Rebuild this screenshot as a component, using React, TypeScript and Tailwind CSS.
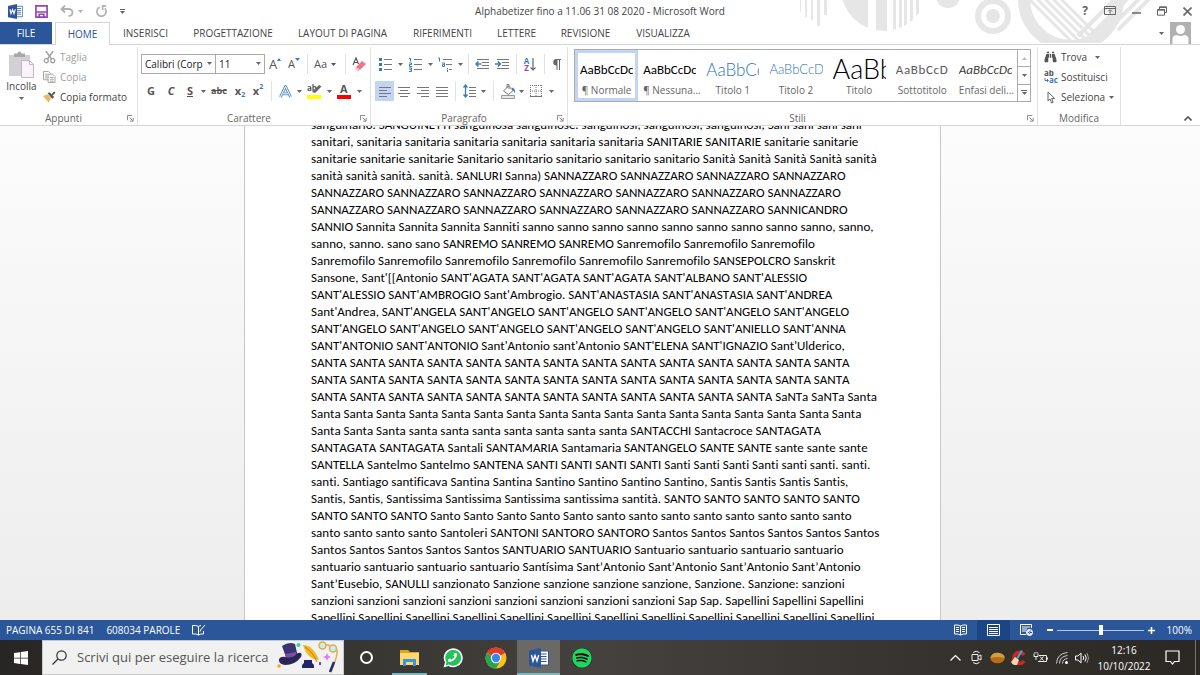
import { useState, type ReactNode } from "react";
import { clsx } from "clsx";
import { FaPhoneAlt, FaSpotify, FaBinoculars } from "react-icons/fa";

const tabs = [
  { label: "INSERISCI", width: "w-[71px]" },
  { label: "PROGETTAZIONE", width: "w-[104px]" },
  { label: "LAYOUT DI PAGINA", width: "w-[115px]" },
  { label: "RIFERIMENTI", width: "w-[85px]" },
  { label: "LETTERE", width: "w-[63px]" },
  { label: "REVISIONE", width: "w-[75px]" },
  { label: "VISUALIZZA", width: "w-[80px]" },
];

const styles = [
  { name: "¶ Normale", sample: "AaBbCcDc", look: "font-[Carlito,Calibri,sans-serif] text-[13px] text-black" },
  { name: "¶ Nessuna...", sample: "AaBbCcDc", look: "font-[Carlito,Calibri,sans-serif] text-[13px] text-black" },
  { name: "Titolo 1", sample: "AaBbCc", look: "font-[Lato,sans-serif] text-[17px] font-light text-[#2e74b5]" },
  { name: "Titolo 2", sample: "AaBbCcD", look: "font-[Lato,sans-serif] text-[13px] font-light text-[#2e74b5]" },
  { name: "Titolo", sample: "AaBb", look: "font-[Lato,sans-serif] text-[27px] font-light text-black" },
  { name: "Sottotitolo", sample: "AaBbCcD", look: "font-[Carlito,Calibri,sans-serif] text-[13px] tracking-wider text-[#5a5a5a]" },
  { name: "Enfasi deli...", sample: "AaBbCcDc", look: "font-[Carlito,Calibri,sans-serif] text-[13px] italic text-[#404040]" },
];

const lines = [
  "sanguinario. SANGUINETTI sanguinosa sanguinose. sanguinosi, sanguinosi, sanguinosi, Sani sani sani sani",
  "sanitari, sanitaria sanitaria sanitaria sanitaria sanitaria sanitaria SANITARIE SANITARIE sanitarie sanitarie",
  "sanitarie sanitarie sanitarie Sanitario sanitario sanitario sanitario sanitario Sanità Sanità Sanità Sanità sanità",
  "sanità sanità sanità. sanità. SANLURI Sanna) SANNAZZARO SANNAZZARO SANNAZZARO SANNAZZARO",
  "SANNAZZARO SANNAZZARO SANNAZZARO SANNAZZARO SANNAZZARO SANNAZZARO SANNAZZARO",
  "SANNAZZARO SANNAZZARO SANNAZZARO SANNAZZARO SANNAZZARO SANNAZZARO SANNICANDRO",
  "SANNIO Sannita Sannita Sannita Sanniti sanno sanno sanno sanno sanno sanno sanno sanno sanno, sanno,",
  "sanno, sanno. sano sano SANREMO SANREMO SANREMO Sanremofilo Sanremofilo Sanremofilo",
  "Sanremofilo Sanremofilo Sanremofilo Sanremofilo Sanremofilo Sanremofilo SANSEPOLCRO Sanskrit",
  "Sansone, Sant'[[Antonio SANT'AGATA SANT'AGATA SANT'AGATA SANT'ALBANO SANT'ALESSIO",
  "SANT'ALESSIO SANT'AMBROGIO Sant'Ambrogio. SANT'ANASTASIA SANT'ANASTASIA SANT'ANDREA",
  "Sant'Andrea, SANT'ANGELA SANT'ANGELO SANT'ANGELO SANT'ANGELO SANT'ANGELO SANT'ANGELO",
  "SANT'ANGELO SANT'ANGELO SANT'ANGELO SANT'ANGELO SANT'ANGELO SANT'ANIELLO SANT'ANNA",
  "SANT'ANTONIO SANT'ANTONIO Sant'Antonio sant'Antonio SANT'ELENA SANT'IGNAZIO Sant'Ulderico,",
  "SANTA SANTA SANTA SANTA SANTA SANTA SANTA SANTA SANTA SANTA SANTA SANTA SANTA SANTA",
  "SANTA SANTA SANTA SANTA SANTA SANTA SANTA SANTA SANTA SANTA SANTA SANTA SANTA SANTA",
  "SANTA SANTA SANTA SANTA SANTA SANTA SANTA SANTA SANTA SANTA SANTA SANTA SaNTa SaNTa Santa",
  "Santa Santa Santa Santa Santa Santa Santa Santa Santa Santa Santa Santa Santa Santa Santa Santa Santa",
  "Santa Santa Santa santa santa santa santa santa santa santa SANTACCHI Santacroce SANTAGATA",
  "SANTAGATA SANTAGATA Santali SANTAMARIA Santamaria SANTANGELO SANTE SANTE sante sante sante",
  "SANTELLA Santelmo Santelmo SANTENA SANTI SANTI SANTI SANTI Santi Santi Santi Santi santi santi. santi.",
  "santi. Santiago santificava Santina Santina Santino Santino Santino Santino, Santis Santis Santis Santis,",
  "Santis, Santis, Santissima Santissima Santissima santissima santità. SANTO SANTO SANTO SANTO SANTO",
  "SANTO SANTO SANTO Santo Santo Santo Santo Santo santo santo santo santo santo santo santo santo",
  "santo santo santo santo Santoleri SANTONI SANTORO SANTORO Santos Santos Santos Santos Santos Santos",
  "Santos Santos Santos Santos Santos SANTUARIO SANTUARIO Santuario santuario santuario santuario",
  "santuario santuario santuario santuario Santísima Sant’Antonio Sant’Antonio Sant’Antonio Sant’Antonio",
  "Sant’Eusebio, SANULLI sanzionato Sanzione sanzione sanzione sanzione, Sanzione. Sanzione: sanzioni",
  "sanzioni sanzioni sanzioni sanzioni sanzioni sanzioni sanzioni sanzioni Sap Sap. Sapellini Sapellini Sapellini",
  "Sapellini Sapellini Sapellini Sapellini Sapellini Sapellini Sapellini Sapellini Sapellini Sapellini Sapellini Sapellini",
];

function Caret({ className }: { className?: string }) {
  return (
    <svg viewBox="0 0 5 3" className={clsx("w-[5px] h-[3px] shrink-0", className)} fill="currentColor">
      <path d="M0 0h5L2.5 3z" />
    </svg>
  );
}

function DropCaret({ label }: { label: string }) {
  return (
    <button aria-label={label} className="w-2 h-5 flex items-center justify-center text-[#666]">
      <Caret />
    </button>
  );
}

function Divider({ className = "w-2" }: { className?: string }) {
  return (
    <div className={clsx("h-5 flex justify-center shrink-0", className)}>
      <div className="w-px h-full bg-[#e1e1e1]" />
    </div>
  );
}

function Tool({
  label,
  width = "w-5",
  active,
  children,
}: {
  label: string;
  width?: string;
  active?: boolean;
  children: ReactNode;
}) {
  return (
    <button
      aria-label={label}
      className={clsx("h-5 flex items-center justify-center shrink-0 text-[#555]", width, active && "bg-[#c2d5f2]")}
    >
      {children}
    </button>
  );
}

function Group({
  title,
  className,
  launcher = true,
  children,
}: {
  title: string;
  className: string;
  launcher?: boolean;
  children: ReactNode;
}) {
  return (
    <section className={clsx("flex flex-col border-r border-[#e1e1e1]", className)}>
      <div className="h-[60px] shrink-0">{children}</div>
      <div className="flex items-center mt-1 h-[14px]">
        <h2 className="flex-1 text-center text-[10px] leading-[14px] text-[#666]">{title}</h2>
        {launcher && (
          <button aria-label={`Opzioni ${title}`} className="w-[10px] text-[#777]">
            <svg viewBox="0 0 8 8" className="w-[7px] h-[7px]" fill="none" stroke="currentColor">
              <path d="M.5 6V.5H6M3 3l3.5 3.5M7 3.5V7H3.5" />
            </svg>
          </button>
        )}
      </div>
    </section>
  );
}

/* Horizontal text lines, each given as [x, y, width] */
function Rules({ rows }: { rows: number[][] }) {
  return (
    <>
      {rows.map(([x, y, w]) => (
        <path key={y} d={`M${x} ${y}h${w}`} stroke="#777" />
      ))}
    </>
  );
}

function WordLogo({ className }: { className: string }) {
  return (
    <svg viewBox="0 0 20 20" className={className}>
      <path d="M10 3h9.500v14H10z" fill="#fff" stroke="#2b579a" />
      <path d="M12 6h5.500M12 8.500h5.500M12 11h5.500M12 13.500h5.500" stroke="#2b579a" />
      <path d="M0 2.500 12 0v20L0 17.500z" fill="#2b579a" />
      <path d="m2.500 7 1.500 6 2-5.500L8 13l1.700-6" fill="none" stroke="#fff" strokeWidth="1.400" />
    </svg>
  );
}

function TitleArt() {
  return (
    <svg viewBox="0 0 400 43" className="absolute right-0 top-0 w-[400px] h-[43px]" fill="#e6e6e6">
      <defs>
        <clipPath id="disc">
          <circle cx="84" cy="-12" r="43" />
        </clipPath>
        <clipPath id="ring">
          <circle cx="271" cy="-1" r="43" />
        </clipPath>
      </defs>
      <path d="M-2 0h3v12h-3zM5 0h2v17H5zM11 0h2v20h-2zM17 0h3v26h-3zM24 0h3v15h-3z" />
      <g clipPath="url(#disc)">
        <path d="M40 0h28v40H40zM76 0h11v40H76zM93 0h3v40h-3zM99 0h3v40h-3zM104 0h3v40h-3zM110 0h3v40h-3zM116 0h3v40h-3z" />
      </g>
      <circle cx="148" cy="-4" r="12" />
      <circle cx="193" cy="16" r="15" fill="none" stroke="#e6e6e6" strokeWidth="6" />
      <circle cx="193" cy="16" r="7" />
      <circle cx="271" cy="-1" r="47" fill="none" stroke="#e6e6e6" strokeWidth="12" />
      <g clipPath="url(#ring)" stroke="#e6e6e6" strokeWidth="3">
        <path d="m222-8 50 50M230-8l50 50M238-8l50 50M246-8l50 50M254-8l50 50" />
      </g>
      <path d="m278 36 38-38M286 40l42-42M298 40l42-42M318 30l32-32" stroke="#e6e6e6" strokeWidth="4" />
    </svg>
  );
}

function TitleBar() {
  return (
    <div className="relative h-[22px] flex items-center text-[#666]">
      <div className="w-[200px] flex items-center pl-2">
        <WordLogo className="w-[15px] h-[15px]" />
        <button aria-label="Salva" className="ml-3">
          <svg viewBox="0 0 14 14" className="w-[13px] h-[13px]" fill="none" stroke="#9147ad" strokeWidth="1.800">
            <path d="M1 1h12v12H1zM1 7.500h12M4.500 13v-3h5v3" />
          </svg>
        </button>
        <button aria-label="Annulla" className="ml-3 flex items-center gap-1 text-[#b0b0b0]">
          <svg viewBox="0 0 14 12" className="w-[14px] h-3" fill="none" stroke="currentColor" strokeWidth="1.800">
            <path d="M5 .5 1.500 4 5 7.500M2 4h6.500c5.500 0 5 7 0 7" />
          </svg>
          <Caret />
        </button>
        <button aria-label="Ripristina" className="ml-3 text-[#b0b0b0]">
          <svg viewBox="0 0 14 14" className="w-[13px] h-[13px]" fill="none" stroke="currentColor" strokeWidth="1.800">
            <path d="M5 2.500a5 5 0 1 0 5.500 1M7.500 1H12M8.200 1v4.500" />
          </svg>
        </button>
        <button aria-label="Personalizza barra di accesso rapido" className="ml-3 flex flex-col items-center gap-px">
          <span className="w-[5px] h-px bg-current" />
          <Caret />
        </button>
      </div>
      <h1 className="flex-1 text-center text-[10px] text-[#444] whitespace-nowrap">
        Alphabetizer fino a 11.06 31 08 2020 - Microsoft Word
      </h1>
      <div className="w-[200px] flex items-center justify-end gap-4 pr-2">
        <button aria-label="Guida" className="text-[12px] leading-4 font-bold">?</button>
        <button aria-label="Opzioni visualizzazione barra multifunzione">
          <svg viewBox="0 0 12 10" className="w-3 h-[10px]" fill="none" stroke="currentColor">
            <path d="M.5.500h11v8H.5zM.5 2.500h11M6 7.500V4M4 5.500l2-2 2 2" />
          </svg>
        </button>
        <button aria-label="Riduci a icona" className="w-[9px]">
          <svg viewBox="0 0 9 9" className="w-[9px] h-[9px]" stroke="currentColor" strokeWidth="1.500">
            <path d="M0 6h9" />
          </svg>
        </button>
        <button aria-label="Ripristina giù">
          <svg viewBox="0 0 10 10" className="w-[10px] h-[10px]" fill="none" stroke="currentColor">
            <path d="M2.500 3V.8h7v5.700H7.500M2.500 1.500h7M.5 3.500h7v5.700h-7zM.5 4.200h7" />
          </svg>
        </button>
        <button aria-label="Chiudi">
          <svg viewBox="0 0 9 9" className="w-[9px] h-[9px]" stroke="currentColor" strokeWidth="1.600">
            <path d="m.5.500 8 8M8.500.500l-8 8" />
          </svg>
        </button>
      </div>
    </div>
  );
}

function TabBar() {
  return (
    <nav className="relative flex h-[23px] border-b border-[#d5d5d5] text-[10px] text-[#444]">
      <button className="w-[52px] bg-[#2b579a] text-white">FILE</button>
      <button className="w-[55px] h-[23px] ml-[3px] bg-white border border-b-0 border-[#d5d5d5] text-[#2b579a]">HOME</button>
      {tabs.map((tab) => (
        <button key={tab.label} className={clsx("whitespace-nowrap", tab.width)}>
          {tab.label}
        </button>
      ))}
      <button aria-label="Account" className="ml-auto mr-[9px] flex items-center gap-[6px] text-[#666]">
        <Caret />
        <svg viewBox="0 0 21 22" className="w-[21px] h-[22px]">
          <path d="M0 0h21v22H0z" fill="#b1b1b1" />
          <circle cx="10.500" cy="7.500" r="4.500" fill="#fff" />
          <path d="M2.500 22v-5q0-3.500 4-4 4 2 8 0 4 .5 4 4v5z" fill="#fff" />
        </svg>
      </button>
    </nav>
  );
}

function ClipboardGroup() {
  return (
    <Group title="Appunti" className="w-[138px]">
      <div className="flex">
        <button className="w-[43px] h-[60px] flex flex-col items-center text-[10px] leading-[14px] text-[#444]">
          <svg viewBox="0 0 26 28" className="w-[26px] h-7 mt-1 shrink-0">
            <path d="M0 4h21v21H0z" fill="#d3d0d5" />
            <path d="M5 6V2.500h3.500a2 2 0 0 1 4 0H16V6z" fill="#aaa7ac" />
            <path d="M12.500 9.500h8l4 4v13h-12z" fill="#faf3fa" stroke="#c0b8c3" />
            <path d="M20.500 9.500v4h4" fill="none" stroke="#c0b8c3" />
          </svg>
          Incolla
          <Caret className="mt-1 text-[#666]" />
        </button>
        <div className="text-[10px] text-[#444]">
          <button className="h-5 flex items-center gap-1 text-[#a0a0a0]">
            <svg viewBox="0 0 14 14" className="w-[13px] h-[13px]" fill="none" stroke="currentColor" strokeWidth="1.300">
              <path d="M3 0 9.500 9M11 0 4.500 9" strokeWidth="1.600" />
              <circle cx="3.500" cy="10.500" r="2.200" />
              <circle cx="10.500" cy="10.500" r="2.200" />
            </svg>
            Taglia
          </button>
          <button className="h-5 flex items-center gap-1 text-[#a0a0a0]">
            <svg viewBox="0 0 14 13" className="w-[13px] h-3" fill="#fff" stroke="currentColor">
              <path d="M.5.500H6l2 2v7H.5zM2 3.500h3M2 5.500h3M2 7.500h3" />
              <path d="M5.500 3.500h5l2.500 2.500v6.500H5.500zM7.500 7h4M7.500 9h4M7.500 11h4" />
            </svg>
            Copia
          </button>
          <button className="h-5 flex items-center gap-1 whitespace-nowrap">
            <svg viewBox="0 0 14 12" className="w-[13px] h-3">
              <path d="m0 5 5-2 4 4-3 5z" fill="#e9b96b" />
              <path d="m5 2 2-1 5 5-2 2z" fill="#555" />
              <path d="m9 3 3-3 1.500 1.500L10.500 4.500z" fill="#555" />
            </svg>
            Copia formato
          </button>
        </div>
      </div>
    </Group>
  );
}

function FontGroup() {
  return (
    <Group title="Carattere" className="w-[233px]">
      <div className="pl-[3px] pt-[7px] flex flex-col gap-[7px]">
        <div className="flex items-center">
          <div className="relative">
            <select
              aria-label="Tipo di carattere"
              className="appearance-none block w-[75px] h-5 border border-[#ababab] bg-white pl-[3px] pr-2 text-[10px] leading-4 text-[#222]"
            >
              <option>Calibri (Corp</option>
            </select>
            <Caret className="absolute right-1 top-2 text-[#666] pointer-events-none" />
          </div>
          <div className="relative">
            <select
              aria-label="Dimensione carattere"
              className="appearance-none block w-[49px] h-5 border border-l-0 border-[#ababab] bg-white pl-[3px] text-[10px] leading-4 text-[#222]"
            >
              <option>11</option>
            </select>
            <Caret className="absolute right-1 top-2 text-[#666] pointer-events-none" />
          </div>
          <Tool label="Aumenta dimensione carattere">
            <span className="text-[13px] leading-5">A</span>
            <svg viewBox="0 0 4 3" className="w-1 h-[3px] mb-[10px]" fill="#3e7ab8">
              <path d="M0 3h4L2 0z" />
            </svg>
          </Tool>
          <Tool label="Riduci dimensione carattere" width="w-[18px]">
            <span className="text-[11px] leading-5">A</span>
            <Caret className="mb-[10px] text-[#3e7ab8]" />
          </Tool>
          <Divider />
          <Tool label="Maiuscole/minuscole" width="w-7">
            <span className="text-[11px]">Aa</span>
            <Caret className="ml-1" />
          </Tool>
          <Divider className="w-3" />
          <Tool label="Cancella formattazione" width="w-4">
            <svg viewBox="0 0 14 14" className="w-[14px] h-[14px]">
              <path d="M1 8 4 1l2.500 6M2 5.500h4" fill="none" stroke="#555" strokeWidth="1.200" />
              <path d="m4 10 6-6 4 3-6 6z" fill="#e8788a" />
              <path d="m4 10 4 3-1.500 1L3 11.500z" fill="#f4b6c0" />
            </svg>
          </Tool>
        </div>
        <div className="flex items-center">
          <Tool label="Grassetto">
            <b className="text-[11px]">G</b>
          </Tool>
          <Tool label="Corsivo">
            <b className="text-[11px] italic">C</b>
          </Tool>
          <Tool label="Sottolineato" width="w-[18px]">
            <b className="text-[11px] underline">S</b>
          </Tool>
          <DropCaret label="Stile sottolineatura" />
          <Tool label="Barrato" width="w-6">
            <b className="text-[9px] line-through">abc</b>
          </Tool>
          <Tool label="Pedice" width="w-[18px]">
            <b className="text-[11px]">x</b>
            <span className="text-[7px] font-bold text-[#3e7ab8] mt-2">2</span>
          </Tool>
          <Tool label="Apice" width="w-[18px]">
            <b className="text-[11px]">x</b>
            <span className="text-[7px] font-bold text-[#3e7ab8] mb-2">2</span>
          </Tool>
          <Divider />
          <Tool label="Effetti testo">
            <svg viewBox="0 0 14 14" className="w-[13px] h-[13px]" fill="none" strokeLinejoin="round">
              <path d="M1.500 13 7 1.500 12.500 13M4 9.500h6" stroke="#5b92cf" strokeWidth="3" />
              <path d="M1.500 13 7 1.500 12.500 13M4 9.500h6" stroke="#fff" strokeWidth="1" />
            </svg>
          </Tool>
          <DropCaret label="Scegli effetto testo" />
          <Tool label="Colore evidenziatore testo" width="w-[22px]">
            <svg viewBox="0 0 15 16" className="w-[15px] h-4">
              <text x="0" y="8" fontSize="8" fontWeight="700" fill="#555">ab</text>
              <path d="m5 9 7-7 2.500 1.500L8 10z" fill="#666" />
              <path d="M0 12h14v4H0z" fill="#ff0" />
            </svg>
          </Tool>
          <DropCaret label="Scegli evidenziatore" />
          <Tool label="Colore carattere" width="w-[22px]">
            <svg viewBox="0 0 15 16" className="w-[15px] h-4">
              <text x="3" y="10" fontSize="11" fontWeight="700" fill="#555">A</text>
              <path d="M0 12h14v4H0z" fill="#f00" />
            </svg>
          </Tool>
          <DropCaret label="Scegli colore carattere" />
        </div>
      </div>
    </Group>
  );
}

function ParagraphGroup() {
  return (
    <Group title="Paragrafo" className="w-[197px]">
      <div className="pl-[3px] pt-[7px] flex flex-col gap-[7px]">
        <div className="flex items-center">
          <Tool label="Elenchi puntati" width="w-[22px]">
            <svg viewBox="0 0 13 14" className="w-[13px] h-[14px]">
              <path d="M0 1h3v3H0zM0 6h3v3H0zM0 11h3v3H0z" fill="#3e7ab8" />
              <Rules rows={[[5, 2.5, 8], [5, 7.5, 8], [5, 12.5, 8]]} />
            </svg>
          </Tool>
          <DropCaret label="Libreria punti elenco" />
          <Tool label="Elenchi numerati" width="w-[22px]">
            <svg viewBox="0 0 13 15" className="w-[13px] h-[15px]">
              <path
                d="M0 1.500h1.500V4.500M0 6h2.500v1.500H.5V9.500H3M0 11h2.500v3.500H0M.5 12.700h2"
                fill="none"
                stroke="#3e7ab8"
              />
              <Rules rows={[[5, 2.5, 8], [5, 7.5, 8], [5, 12.5, 8]]} />
            </svg>
          </Tool>
          <DropCaret label="Libreria numerazione" />
          <Tool label="Elenco a più livelli" width="w-[22px]">
            <svg viewBox="0 0 15 15" className="w-[15px] h-[15px]">
              <path
                d="M0 1h1.500v3.500M4 6h2.500v3.500H4.500V7.700h2M9.500 11v1M9.500 12.500V15"
                fill="none"
                stroke="#3e7ab8"
              />
              <Rules rows={[[5, 2.5, 9], [8, 7.5, 6], [11, 12.5, 3]]} />
            </svg>
          </Tool>
          <DropCaret label="Libreria elenchi" />
          <Divider />
          <Tool label="Riduci rientro">
            <svg viewBox="0 0 14 11" className="w-[14px] h-[11px]">
              <Rules rows={[[2, 0.5, 12], [7, 3.5, 7], [7, 6.5, 7], [2, 9.5, 12]]} />
              <path d="M6.500 5H1M3.500 2.500 1 5l2.500 2.500" fill="none" stroke="#3e7ab8" strokeWidth="1.500" />
            </svg>
          </Tool>
          <Tool label="Aumenta rientro">
            <svg viewBox="0 0 14 11" className="w-[14px] h-[11px]">
              <Rules rows={[[2, 0.5, 12], [7, 3.5, 7], [7, 6.5, 7], [2, 9.5, 12]]} />
              <path d="M0 5h5.500M3 2.500 5.500 5 3 7.500" fill="none" stroke="#3e7ab8" strokeWidth="1.500" />
            </svg>
          </Tool>
          <Divider />
          <Tool label="Ordina">
            <span className="flex flex-col text-[8px] leading-[7px] font-bold">
              <span className="text-[#3e7ab8]">A</span>
              <span className="text-[#9147ad]">Z</span>
            </span>
            <svg viewBox="0 0 6 13" className="w-[6px] h-[13px] ml-px" fill="none" stroke="#666" strokeWidth="1.200">
              <path d="M3 0v12M.5 9.500 3 12l2.500-2.500" />
            </svg>
          </Tool>
          <Divider />
          <Tool label="Mostra tutto" width="w-4">
            <svg viewBox="0 0 9 11" className="w-[9px] h-[11px]" fill="#666">
              <path d="M4.500 6.500a3.200 3.200 0 0 1 0-6.500H9v1H8v10H7V1H5.500v10h-1z" />
            </svg>
          </Tool>
        </div>
        <div className="flex items-center pl-px">
          <Tool label="Allinea a sinistra" width="w-[19px]" active>
            <svg viewBox="0 0 12 11" className="w-3 h-[11px]">
              <Rules rows={[[0, 1.5, 12], [0, 4.5, 8], [0, 7.5, 12], [0, 10.5, 8]]} />
            </svg>
          </Tool>
          <Tool label="Centra" width="w-[19px]">
            <svg viewBox="0 0 12 11" className="w-3 h-[11px]">
              <Rules rows={[[0, 1.5, 12], [2, 4.5, 8], [0, 7.5, 12], [2, 10.5, 8]]} />
            </svg>
          </Tool>
          <Tool label="Allinea a destra" width="w-[19px]">
            <svg viewBox="0 0 12 11" className="w-3 h-[11px]">
              <Rules rows={[[0, 1.5, 12], [4, 4.5, 8], [0, 7.5, 12], [4, 10.5, 8]]} />
            </svg>
          </Tool>
          <Tool label="Giustifica" width="w-[19px]">
            <svg viewBox="0 0 12 11" className="w-3 h-[11px]">
              <Rules rows={[[0, 1.5, 12], [0, 4.5, 12], [0, 7.5, 12], [0, 10.5, 12]]} />
            </svg>
          </Tool>
          <Divider />
          <Tool label="Interlinea">
            <svg viewBox="0 0 13 14" className="w-[13px] h-[14px]">
              <Rules rows={[[6, 3.5, 7], [6, 6.5, 7], [6, 9.5, 7], [6, 12.5, 7]]} />
              <path d="M2.500 1v12M.5 3.500 2.500 1l2 2.500M.5 10.500l2 2.500 2-2.500" fill="none" stroke="#3e7ab8" strokeWidth="1.300" />
            </svg>
          </Tool>
          <DropCaret label="Opzioni interlinea" />
          <Divider className="w-3" />
          <Tool label="Sfondo" width="w-[18px]">
            <svg viewBox="0 0 15 15" className="w-[15px] h-[15px]">
              <path d="m2.500 7 5-5 4.500 4.500-4.500 4z" fill="#fff" stroke="#777" />
              <path d="M6 4V0.500h2V5" fill="none" stroke="#777" />
              <path d="M10.500 3.500q4 0 3.500 6-1-3-2.500-3z" fill="#3e7ab8" />
              <path d="M.5 11.500h13v3H.5z" fill="#e8e8e8" stroke="#999" />
            </svg>
          </Tool>
          <DropCaret label="Colore sfondo" />
          <Tool label="Bordi" width="w-[22px]">
            <svg viewBox="0 0 12 12" className="w-3 h-3" fill="none" stroke="#777">
              <path d="M.5 0v11M6 0v11M11.500 0v11M0 .5h12M0 6h12" strokeDasharray="1 1" />
              <path d="M0 11.500h12" />
            </svg>
          </Tool>
          <DropCaret label="Scegli bordi" />
        </div>
      </div>
    </Group>
  );
}

function StylesGroup() {
  const [selected, setSelected] = useState("¶ Normale");
  return (
    <Group title="Stili" className="flex-1 min-w-0">
      <div className="mx-[6px] pt-[2px]">
        <div className="flex h-[53px] border border-[#ababab]">
          <div className="flex flex-1 min-w-0 overflow-hidden">
            {styles.map((style) => (
              <button
                key={style.name}
                onClick={() => setSelected(style.name)}
                className={clsx(
                  "flex-1 min-w-0 h-[51px] flex flex-col border-3 px-[2px]",
                  selected === style.name ? "border-[#c2d5f2]" : "border-transparent"
                )}
              >
                <span
                  className={clsx(
                    "w-full h-[29px] pt-1 flex items-center overflow-hidden whitespace-nowrap",
                    style.look
                  )}
                >
                  {style.sample}
                </span>
                <span className="w-full text-center text-[10px] leading-4 text-[#666] whitespace-nowrap">{style.name}</span>
              </button>
            ))}
          </div>
          <div className="w-[13px] flex flex-col border-l border-[#ababab] divide-y divide-[#ababab] text-[#666]">
            <button aria-label="Riga precedente" className="flex-1 flex items-center justify-center text-[#bbb]">
              <Caret className="rotate-180" />
            </button>
            <button aria-label="Riga successiva" className="flex-1 flex items-center justify-center">
              <Caret />
            </button>
            <button aria-label="Altro" className="flex-1 flex flex-col gap-px items-center justify-center">
              <span className="w-[6px] h-px bg-current" />
              <Caret />
            </button>
          </div>
        </div>
      </div>
    </Group>
  );
}

function EditingGroup() {
  return (
    <Group title="Modifica" className="w-[83px]" launcher={false}>
      <div className="pl-[6px] text-[10px] text-[#444]">
        <button className="h-5 flex items-center gap-1">
          <FaBinoculars className="w-[13px] h-3 text-[#555]" />
          Trova
          <Caret className="ml-1 text-[#666]" />
        </button>
        <button className="h-5 flex items-center gap-[3px]">
          <svg viewBox="0 0 14 14" className="w-[14px] h-[14px]" fontSize="8" fontWeight="700">
            <text x="0" y="6" fill="#555">ab</text>
            <text x="5" y="13" fill="#3e7ab8">ac</text>
            <path d="M1 8v2.500h3M3 9l1.500 1.500L3 12" fill="none" stroke="#3e7ab8" />
          </svg>
          Sostituisci
        </button>
        <button className="h-5 flex items-center gap-1">
          <svg viewBox="0 0 13 13" className="w-[13px] h-[13px]" fill="#fff" stroke="#666">
            <path d="M4 1v9l2-2 1.500 4 1.700-.7L7.700 7.500h3z" />
          </svg>
          Seleziona
          <Caret className="text-[#666]" />
        </button>
      </div>
    </Group>
  );
}

function StatusBar() {
  const [zoom, setZoom] = useState(100);
  return (
    <footer className="flex items-center h-5 shrink-0 bg-[#2b579a] text-[10px] text-white">
      <button className="pl-[6px] whitespace-nowrap">PAGINA 655 DI 841</button>
      <button className="ml-3 whitespace-nowrap">608034 PAROLE</button>
      <button aria-label="Controllo ortografia" className="ml-3">
        <svg viewBox="0 0 14 12" className="w-[14px] h-3" fill="none" stroke="#fff">
          <path d="M6.500 2.500Q4 1 .5 1.500v8.500q3.500-.5 6 1 2-1.500 5-1V7M6.500 2.500V11M6.500 2.500Q8 1.500 9 1.500M8 7.500l1-2 4-4.500" />
        </svg>
      </button>
      <div className="ml-auto flex items-center">
        <button aria-label="Modalità lettura" className="w-[33px] flex justify-center">
          <svg viewBox="0 0 13 12" className="w-[13px] h-3" fill="none" stroke="#fff">
            <path d="M6.500 2Q4 .5.500 1v9q3.500-.5 6 1 2.500-1.500 6-1V1Q9 .5 6.500 2zM6.500 2v9M2 3.500h3M2 5.500h3M2 7.500h3M8 3.500h3M8 5.500h3M8 7.500h3" />
          </svg>
        </button>
        <button aria-label="Layout di stampa" className="w-[33px] h-5 flex items-center justify-center bg-[#1c4586]">
          <svg viewBox="0 0 13 12" className="w-[13px] h-3" fill="none" stroke="#fff">
            <path d="M.5.500h12v11H.5zM2 3.500h9M2 5.500h9M2 7.500h9M2 9.500h9" />
          </svg>
        </button>
        <button aria-label="Layout Web" className="w-[33px] flex justify-center">
          <svg viewBox="0 0 13 12" className="w-[13px] h-3" fill="none" stroke="#fff">
            <path d="M6 10.500H.5V.5h11V4M2 3h8M2 5h5M2 7h4" />
            <circle cx="9.500" cy="8.500" r="3" fill="#dbe4f2" />
            <path d="m8 8 2 2M10 6.500v2h2" stroke="#2b579a" />
          </svg>
        </button>
        <button aria-label="Zoom indietro" className="ml-1 w-[6px] h-[2px] bg-white" />
        <input
          type="range"
          aria-label="Zoom"
          min={0}
          max={200}
          value={zoom}
          onChange={(e) => setZoom(Number(e.target.value))}
          className="appearance-none mx-1 w-[87px] h-3 bg-transparent bg-[linear-gradient(#b8c6dd,#b8c6dd)] bg-[length:100%_1px] bg-center bg-no-repeat [&::-webkit-slider-thumb]:appearance-none [&::-webkit-slider-thumb]:w-1 [&::-webkit-slider-thumb]:h-[10px] [&::-webkit-slider-thumb]:bg-white"
        />
        <button aria-label="Zoom avanti">
          <svg viewBox="0 0 7 7" className="w-[7px] h-[7px]" stroke="#fff" strokeWidth="1.600">
            <path d="M3.500 0v7M0 3.500h7" />
          </svg>
        </button>
        <span className="w-[45px] pr-2 text-right">{zoom}%</span>
      </div>
    </footer>
  );
}

function SearchArt() {
  return (
    <svg viewBox="0 0 66 33" className="w-[66px] h-[33px] shrink-0">
      <path d="M5 5q7-5 13-2l3 13q-5 5-11 3z" fill="#3b3470" />
      <path d="m8 13 11-2 1 4-11 3z" fill="#7a4fa3" />
      <path d="M2 18q2-3 6-2 7 2 13-4 5-1 3 4-6 8-16 8-7-1-6-6z" fill="#2a2554" />
      <circle cx="21.500" cy="4" r="2" fill="#42d68c" />
      <circle cx="2" cy="25" r="1.800" fill="#f9ab17" />
      <path d="M26 4q10 0 16 15Q30 18 26 4z" fill="#f7b521" />
      <path d="M28 6q8 5 12 15" fill="none" stroke="#c47b10" />
      <path d="M27 19h8v3q2 1 2 3v2H25v-2q0-2 2-3z" fill="#24246b" />
      <path d="M42 21h2v3h-2z" fill="#6c4cc0" />
      <circle cx="45.500" cy="4.500" r="3.500" fill="#c8eef5" stroke="#dfae47" strokeWidth="1.500" />
      <circle cx="56" cy="7.500" r="3.500" fill="#c8eef5" stroke="#dfae47" strokeWidth="1.500" />
      <path d="M49 4.500q2-2 4 1" fill="none" stroke="#dfae47" strokeWidth="1.500" />
      <path d="M60 9q1 5-6 22" fill="none" stroke="#dfae47" strokeWidth="1.500" />
      <path d="M57 21l-4 10" stroke="#232a7a" strokeWidth="2.500" />
      <path d="m50 12 1.200 2.800L54 16l-2.800 1.200L50 20l-1.200-2.800L46 16l2.800-1.200z" fill="#e07af0" />
    </svg>
  );
}

function TaskButton({ label, running, active, children }: { label: string; running?: boolean; active?: boolean; children: ReactNode }) {
  return (
    <button
      aria-label={label}
      className={clsx("w-[43px] h-full flex items-center justify-center relative", active && "bg-[#6b6966]")}
    >
      {children}
      {(running || active) && (
        <span className={clsx("absolute bottom-0 h-[2px] bg-[#76b9c0]", active ? "inset-x-0" : "inset-x-1")} />
      )}
    </button>
  );
}

function Taskbar() {
  return (
    <div className="flex items-center h-[35px] shrink-0 bg-linear-to-r from-[#272624] via-[#44413e] to-[#2b2824] text-white">
      <button aria-label="Start" className="w-[42px] h-full flex items-center justify-center">
        <svg viewBox="0 0 14 14" className="w-[14px] h-[14px]" fill="#fff">
          <path d="m0 2 6-.8v5.500H0zM6.700 1.100 14 0v6.700H6.700zM0 7.400h6v5.500L0 12zM6.700 7.400H14V14l-7.300-1z" />
        </svg>
      </button>
      <label className="flex items-center w-[302px] h-full bg-[#f1f1f1] border border-[#c9c9c9] pl-[9px]">
        <svg viewBox="0 0 15 15" className="w-[15px] h-[15px] shrink-0" fill="none" stroke="#333" strokeWidth="1.200">
          <circle cx="9.500" cy="5.500" r="4.700" />
          <path d="M6 9 .5 14.500" />
        </svg>
        <input
          type="text"
          aria-label="Cerca"
          placeholder="Scrivi qui per eseguire la ricerca"
          className="flex-1 min-w-0 ml-[10px] bg-transparent text-[13px] placeholder:text-[#555] outline-none"
        />
        <SearchArt />
      </label>
      <div className="flex h-full pl-px">
        <TaskButton label="Cortana">
          <span className="w-[13px] h-[13px] rounded-full border-2 border-white" />
        </TaskButton>
        <TaskButton label="Esplora file" running>
          <svg viewBox="0 0 20 17" className="w-5 h-[17px]">
            <path d="M0 1h8l2 2h9v13H0z" fill="#d9a520" />
            <path d="M0 4h19v12H0z" fill="#ffd86b" />
            <path d="M3 17v-7h13v7h-3v-4H6v4z" fill="#3d94dc" />
          </svg>
        </TaskButton>
        <TaskButton label="WhatsApp">
          <span className="relative flex items-center justify-center">
            <svg viewBox="0 0 20 20" className="w-5 h-5">
              <path d="m.5 19.500 1.500-5a9.500 9.500 0 1 1 3.500 3.500z" fill="#fff" />
              <path d="m2.500 17.500 1-3.500a7.900 7.900 0 1 1 2.500 2.500z" fill="#25c15a" />
            </svg>
            <FaPhoneAlt className="absolute w-[9px] h-[9px] -scale-x-100" />
          </span>
        </TaskButton>
        <TaskButton label="Chrome">
          <svg viewBox="0 0 22 22" className="w-[22px] h-[22px]">
            <circle cx="11" cy="11" r="10.500" fill="#fbc116" />
            <path d="M11 11 1.900 5.700A10.500 10.500 0 0 1 20.100 5.700z" fill="#e33b2e" />
            <path d="M11 5.700h9.100L11 11z" fill="#e33b2e" />
            <path d="M1.900 5.700A10.500 10.500 0 0 0 11 21.500l4.600-8L11 11z" fill="#2da44e" />
            <circle cx="11" cy="11" r="5.200" fill="#fff" />
            <circle cx="11" cy="11" r="4.200" fill="#3f83f0" />
          </svg>
        </TaskButton>
        <TaskButton label="Word" active>
          <WordLogo className="w-5 h-5" />
        </TaskButton>
        <TaskButton label="Spotify">
          <span className="rounded-full bg-black">
            <FaSpotify className="w-5 h-5 text-[#1ed760]" />
          </span>
        </TaskButton>
      </div>
      <div className="ml-auto h-full flex items-center">
        <button aria-label="Mostra icone nascoste" className="w-[21px] flex justify-center">
          <svg viewBox="0 0 11 6" className="w-[11px] h-[6px]" fill="none" stroke="#fff" strokeWidth="1.200">
            <path d="m.5 5.500 5-5 5 5" />
          </svg>
        </button>
        <button aria-label="Riunione" className="w-[21px] flex justify-center">
          <svg viewBox="0 0 11 15" className="w-[11px] h-[15px]" fill="none" stroke="#eee">
            <path d="M1 4.500h6v6H1zM7 6.500l3-1.500v5L7 8.500M2 2.500Q5 0 8.500 2.500M2 12.500q3 2.500 6.500 0" />
          </svg>
        </button>
        <button aria-label="Utilità" className="w-[21px] flex justify-center">
          <svg viewBox="0 0 15 12" className="w-[15px] h-3">
            <ellipse cx="7.500" cy="6" rx="7.200" ry="5.300" fill="#bd6a17" />
            <path d="M.5 6Q2 0 9 1q6 1 5.500 5-7-2-14 0z" fill="#c9a33b" />
          </svg>
        </button>
        <button aria-label="CCleaner" className="w-[21px] flex justify-center">
          <svg viewBox="0 0 15 15" className="w-[15px] h-[15px]">
            <path d="M13 5A5.500 5.500 0 1 0 13 11" fill="none" stroke="#d5261e" strokeWidth="3.500" />
            <path d="m10 0 2 1-5 8-2-1z" fill="#4e9bdc" />
            <path d="m4 7 4 3-2 5q-4 1-6-3z" fill="#f3d5aa" />
          </svg>
        </button>
        <button aria-label="Batteria" className="w-[22px] flex justify-center">
          <svg viewBox="0 0 15 11" className="w-[15px] h-[11px]" fill="none" stroke="#eee">
            <path d="M1 1.500v3h4v-3M2 0v1.500M4 0v1.500M3 4.500V8M6 3.500h7.500v6H5M14.500 5.500v2M7 4.500l3.500 4M10.500 4.500 7 8.500" />
          </svg>
        </button>
        <button aria-label="Rete" className="w-[21px] flex justify-center">
          <svg viewBox="0 0 12 12" className="w-3 h-3" fill="none" stroke="#ccc">
            <path d="M.5 11.500Q1 1.500 11.500.500M3.500 11.500q0-7 8-8M6.500 11.500q0-4.500 5-5" />
            <circle cx="10.500" cy="10.500" r="1.500" fill="#fff" stroke="none" />
          </svg>
        </button>
        <button aria-label="Volume" className="w-[20px] flex justify-center">
          <svg viewBox="0 0 14 12" className="w-[14px] h-3" fill="none" stroke="#fff">
            <path d="M.5 4v4H3l3 3V1L3 4zM8 4q1.500 2 0 4M10 2.500q2.500 3.500 0 7" />
            <path d="M12 1q3 5 0 10" stroke="#999" />
          </svg>
        </button>
        <button className="w-[64px] text-[10px] leading-4 text-center">
          12:16
          <br />
          10/10/2022
        </button>
        <button aria-label="Notifiche" className="w-8 flex justify-center">
          <svg viewBox="0 0 15 15" className="w-[15px] h-[15px]" fill="none" stroke="#fff" strokeWidth="1.200">
            <path d="M1 1h13v10.500H9.500L7.500 14l-2-2.500H1z" />
          </svg>
        </button>
        <button aria-label="Mostra desktop" className="w-3 h-full flex justify-end">
          <span className="w-px h-full mr-1 bg-[#77746f]" />
        </button>
      </div>
    </div>
  );
}

export default function App() {
  return (
    <div className="h-screen flex flex-col overflow-hidden bg-white font-['Open_Sans',sans-serif]">
      <header className="relative shrink-0">
        <TitleArt />
        <TitleBar />
        <TabBar />
        <div className="relative flex h-[81px] pt-[2px] bg-white border-b border-[#d5d5d5]">
          <ClipboardGroup />
          <FontGroup />
          <ParagraphGroup />
          <StylesGroup />
          <EditingGroup />
          <div className="w-[79px] flex items-end justify-end pb-1 pr-2">
            <button aria-label="Comprimi barra multifunzione">
              <svg viewBox="0 0 8 5" className="w-2 h-[5px]" fill="none" stroke="#555" strokeWidth="1.600">
                <path d="m.5 4.500 3.500-3.500 3.500 3.500" />
              </svg>
            </button>
          </div>
        </div>
      </header>
      <main className="flex-1 min-h-0 overflow-hidden flex justify-center pr-[15px] bg-linear-to-b from-[#fcfcfc] to-[#ededed]">
        <article className="w-[697px] bg-white border-x border-[#c8c8c8] pl-[66px]">
          <div className="-mt-[10px] font-[Carlito,Calibri,Lato,sans-serif] text-[13px] leading-[17px] text-black [font-kerning:none] [font-variant-ligatures:none]">
            {lines.map((line, i) => (
              <p key={i} className="whitespace-nowrap">
                {line}
              </p>
            ))}
          </div>
        </article>
      </main>
      <StatusBar />
      <Taskbar />
    </div>
  );
}
